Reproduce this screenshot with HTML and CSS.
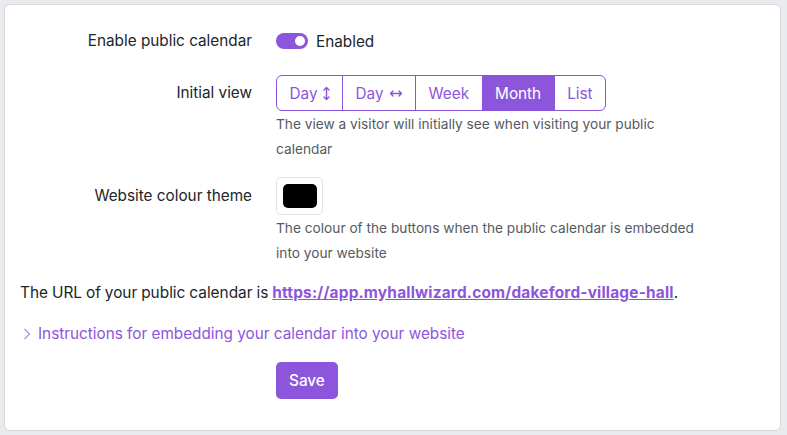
FILE: index.html
```html
<!DOCTYPE html>
<html>
<head>
<meta charset="utf-8">
<link rel="stylesheet" href="styles.css">
</head>
<body>
<div class="card">
  <div class="row r-toggle">
    <div class="label">Enable public calendar</div>
    <div class="control toggle-line">
      <span class="toggle"><span class="knob"></span></span>
      <span class="toggle-text">Enabled</span>
    </div>
  </div>
  <div class="row r-view">
    <div class="label lbl-btn">Initial view</div>
    <div class="control">
      <div class="btn-group">
        <span class="seg">Day<svg class="arrow-v" width="7" height="15" viewBox="0 0 7 15"><path d="M3.5 1.5 V13.5 M1 4 L3.5 1.5 L6 4 M1 11 L3.5 13.5 L6 11" fill="none" stroke="currentColor" stroke-width="1.4" stroke-linecap="round" stroke-linejoin="round"/></svg></span><span class="seg">Day<svg class="arrow-h" width="14" height="9" viewBox="0 0 14 9"><path d="M1.5 4.5 H12.5 M4 2 L1.5 4.5 L4 7 M10 2 L12.5 4.5 L10 7" fill="none" stroke="currentColor" stroke-width="1.4" stroke-linecap="round" stroke-linejoin="round"/></svg></span><span class="seg">Week</span><span class="seg active">Month</span><span class="seg">List</span>
      </div>
      <div class="help">The view a visitor will initially see when visiting your public calendar</div>
    </div>
  </div>
  <div class="row r-colour">
    <div class="label lbl-colour">Website colour theme</div>
    <div class="control">
      <div class="swatch"><span class="swatch-inner"></span></div>
      <div class="help">The colour of the buttons when the public calendar is embedded into your website</div>
    </div>
  </div>
  <p class="url">The URL of your public calendar is <a href="#">https://app.myhallwizard.com/dakeford-village-hall</a>.</p>
  <div class="instructions"><svg class="chev" width="18" height="12" viewBox="0 0 18 12"><path d="M4.5 1 L9.5 6 L4.5 11" fill="none" stroke="#b08ae6" stroke-width="1.2"/></svg>Instructions for embedding your calendar into your website</div>
  <div class="save-row"><span class="save">Save</span></div>
</div>
</body>
</html>
```
FILE: styles.css
```css
html, body { margin: 0; padding: 0; }
body {
  background: #e9ebee;
  font-family: Inter, "Noto Sans", sans-serif;
  color: #212529;
  padding: 4px 6px 4px 4px;
  height: 435px;
  box-sizing: border-box;
}
.card {
  background: #fff;
  border: 1px solid #d6d8db;
  border-radius: 6px;
  height: 427px;
  box-sizing: border-box;
  padding: 21px 15px 0 15px;
}
.row {
  display: flex;
}
.label {
  width: 232px;
  text-align: right;
  font-size: 15.3px;
  padding-right: 24px;
  flex: none;
}
.control { flex: 1; }
.toggle-line {
  display: flex;
  align-items: center;
  gap: 8px;
  font-size: 15.3px;
}
.r-toggle .label { line-height: 30px; }
.toggle-line { height: 30px; }
.toggle {
  width: 32px;
  height: 16px;
  border-radius: 8px;
  background: #8d55dc;
  position: relative;
  display: inline-block;
}
.knob {
  position: absolute;
  right: 3px;
  top: 3px;
  width: 10px;
  height: 10px;
  border-radius: 50%;
  background: #fff;
}
.r-view { margin-top: 19px; }
.lbl-btn { line-height: 36px; }
.btn-group {
  display: inline-flex;
  border: 1px solid #8d55dc;
  border-radius: 6px;
  overflow: hidden;
  height: 36px;
  box-sizing: border-box;
}
.seg {
  display: flex;
  align-items: center;
  padding: 0 12.5px;
  font-size: 15.3px;
  color: #8d55dc;
  border-left: 1px solid #8d55dc;
  white-space: pre;
}
.arrow-v { margin-left: 5px; margin-top: 1px; }
.arrow-h { margin-left: 5px; margin-top: 1px; }
.seg:first-child { border-left: none; }
.seg.active { background: #8d55dc; color: #fff; }
.help {
  font-size: 13.7px;
  line-height: 24.5px;
  color: #555a5f;
  max-width: 425px;
  margin-top: 1px;
}
.r-colour { margin-top: 16px; }
.lbl-colour { line-height: 38px; }
.swatch {
  width: 47px;
  height: 38px;
  border: 1px solid #dee2e6;
  border-radius: 5px;
  box-sizing: border-box;
  display: flex;
  align-items: center;
  justify-content: center;
}
.swatch-inner {
  width: 34px;
  height: 24px;
  background: #000;
  border-radius: 5px;
}
.url {
  margin: 16px 0 0 0;
  font-size: 15.4px;
  line-height: 24px;
  word-spacing: -0.4px;
}
.url a { color: #8d55dc; font-weight: 700; letter-spacing: 0.2px; word-spacing: 0; }
.instructions {
  margin-top: 17px;
  font-size: 15.3px;
  line-height: 24px;
  color: #8d55dc;
  display: flex;
  align-items: center;
}
.chev {
  width: 18px;
  height: 12px;
  flex: none;
}
.save-row {
  padding-left: 256px;
  margin-top: 16px;
}
.save {
  display: inline-block;
  background: #8d55dc;
  color: #fff;
  font-size: 15.3px;
  font-weight: 500;
  padding: 0 13px;
  line-height: 37px;
  border-radius: 5px;
}
```
